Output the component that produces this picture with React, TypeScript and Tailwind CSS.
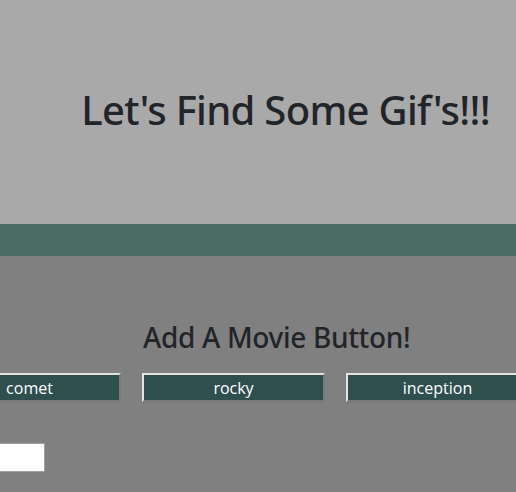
export default function App() {
  const font = { fontFamily: '"Open Sans", "Noto Sans", sans-serif' };
  const head = { fontFamily: '"Noto Sans", "Open Sans", sans-serif' };
  return (
    <div className="w-[516px] h-[492px] overflow-hidden bg-[#808080] text-[#212529]" style={font}>
      <div className="h-[224px] bg-[#a9a9a9] flex items-start justify-end pr-[26px] pt-[86px]">
        <h1 className="text-[40px] leading-[48px] font-medium whitespace-nowrap tracking-[-0.7px]" style={head}>Let's Find Some Gif's!!!</h1>
      </div>
      <div className="h-[32px] bg-[#4b6b65]" />
      <div className="pt-[64px]">
        <h3 className="text-[28px] leading-[34px] font-medium ml-[143px] whitespace-nowrap tracking-[-0.33px]" style={head}>Add A Movie Button!</h3>
        <div className="flex gap-[21px] ml-[-62px] mt-[19px]">
          {["comet", "rocky", "inception"].map((m) => (
            <button
              key={m}
              className="shrink-0 w-[183px] h-[29px] bg-[#2f4f4f] text-white text-[16px] leading-[24px] pt-[1px] border-2 border-t-[#e3e3e3] border-l-[#e3e3e3] border-r-[#7a7a7a] border-b-[#7a7a7a]"
            >
              {m}
            </button>
          ))}
        </div>
        <div className="mt-[41px] ml-[-120px] w-[165px] h-[29px] bg-white border border-[#a0a0a0]" />
      </div>
    </div>
  );
}
